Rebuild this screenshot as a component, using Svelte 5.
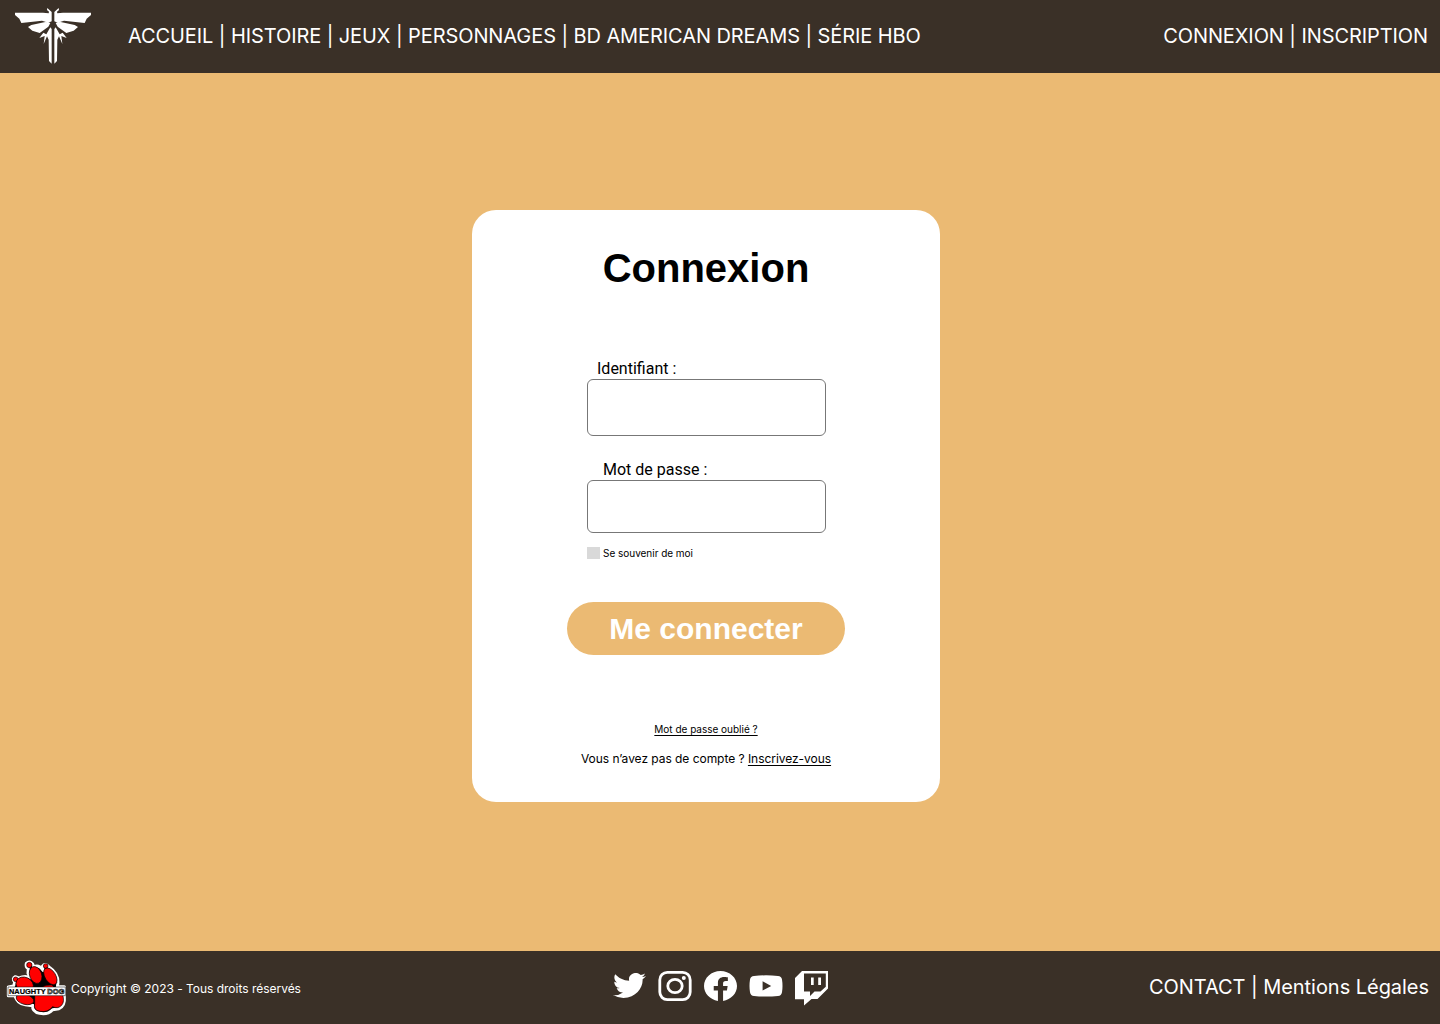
<script>
  const links = ['ACCUEIL', 'HISTOIRE', 'JEUX', 'PERSONNAGES', 'BD AMERICAN DREAMS', 'SÉRIE HBO'];
</script>

<div class="page">
  <header class="bar">
    <svg class="firefly" viewBox="36 18 246 180" aria-label="Firefly">
      <g fill="#fff">
        <path d="M45 38 L129 38 L146 40 L147 35 L141 30 L142 24 L155 36 L155 64 L145 68 L126 62 L64 69 L58 56 L45 45 Z M84 81 L94 75 L136 66 L151 69 L145 80 L119 99 L97 92 Z M151 82 L155 87 L155 191 L147 183 L146 119 L141 109 L131 132 L134 108 L118 114 L130 98 L139 103 Z" />
        <path d="M273 38 L189 38 L172 40 L171 35 L177 30 L176 24 L163 36 L163 64 L173 68 L192 62 L254 69 L260 56 L273 45 Z M234 81 L224 75 L182 66 L167 69 L173 80 L199 99 L221 92 Z M167 82 L163 87 L163 191 L171 183 L172 119 L177 109 L187 132 L184 108 L200 114 L188 98 L179 103 Z" />
      </g>
    </svg>
    <nav class="main">
      {#each links as link, i}{#if i}{' | '}{/if}<span>{link}</span>{/each}
    </nav>
    <nav class="side">CONNEXION | INSCRIPTION</nav>
  </header>

  <main>
    <form class="card">
      <h1>Connexion</h1>
      <label class="user" for="user">Identifiant :</label>
      <input id="user" class="field tall" type="text" />
      <label class="pass" for="pass">Mot de passe :</label>
      <input id="pass" class="field" type="password" />
      <div class="remember"><span class="box"></span><span>Se souvenir de moi</span></div>
      <button type="button">Me connecter</button>
      <span class="forgot">Mot de passe oublié ?</span>
      <p>Vous n’avez pas de compte ? <span class="signup">Inscrivez-vous</span></p>
    </form>
  </main>

  <footer class="bar">
    <svg class="paw" viewBox="18 24 186 180" aria-label="Naughty Dog">
      <path fill="#000" stroke="#fff" stroke-width="9" stroke-linejoin="round" d="M79 40 Q89 31 98 42 L101 50 Q117 44 126 57 L130 62 L127 49 Q136 37 147 51 Q175 70 174 98 L172 110 H193 V137 Q196 168 177 176 L158 179 Q143 195 119 190 Q96 185 98 166 Q60 168 50 149 L44 137 H25 V111 L41 108 L44 96 Q35 86 46 80 L56 84 Q76 75 94 84 L84 70 L85 56 Q76 51 79 40 Z" />
      <g fill="#f00" stroke="#000" stroke-width="2">
        <circle cx="88" cy="45" r="8" /><circle cx="137" cy="48" r="7" />
        <circle cx="47" cy="88" r="7" />
        <ellipse cx="107" cy="75" rx="18" ry="26" transform="rotate(-20 107 75)" />
        <ellipse cx="151" cy="79" rx="16" ry="28" transform="rotate(-32 151 79)" />
        <ellipse cx="74" cy="104" rx="27" ry="22" transform="rotate(25 74 104)" />
        <ellipse cx="75" cy="148" rx="27" ry="15" transform="rotate(15 75 148)" />
        <path d="M104 134 Q122 102 156 105 Q170 124 187 131 Q195 154 185 166 Q173 178 158 170 Q143 188 121 184 Q99 182 104 160 Z" />
      </g>
      <path fill="#fff" stroke="#000" stroke-width="1.5" d="M24 111 H196 V137 H24 Z" />
      <text x="27" y="132" textLength="110" lengthAdjust="spacingAndGlyphs" class="brand">NAUGHTY</text>
      <text x="142" y="132" textLength="51" lengthAdjust="spacingAndGlyphs" class="brand outline">DOG</text>
    </svg>
    <span class="copy">Copyright © 2023 - Tous droits réservés</span>
    <div class="social">
      <svg class="twitter" viewBox="0 2.2 24 19.6" preserveAspectRatio="none"><path fill="#fff" d="M23.953 4.57a10 10 0 01-2.825.775 4.958 4.958 0 002.163-2.723c-.951.555-2.005.959-3.127 1.184a4.92 4.92 0 00-8.384 4.482C7.69 8.095 4.067 6.13 1.64 3.162a4.822 4.822 0 00-.666 2.475c0 1.71.87 3.213 2.188 4.096a4.904 4.904 0 01-2.228-.616v.06a4.923 4.923 0 003.946 4.827 4.996 4.996 0 01-2.212.085 4.936 4.936 0 004.604 3.417 9.867 9.867 0 01-6.102 2.105c-.39 0-.779-.023-1.17-.067a13.995 13.995 0 007.557 2.209c9.053 0 13.998-7.496 13.998-13.985 0-.21 0-.42-.015-.63A9.935 9.935 0 0024 4.59z" /></svg>
      <svg class="instagram" viewBox="0 0 34 30"><g fill="none" stroke="#fff" stroke-width="2.8"><rect x="1.8" y="1.4" width="30.4" height="27.2" rx="7.5" /><ellipse cx="17" cy="15" rx="7.2" ry="6.7" /></g><circle cx="25.8" cy="7.1" r="2" fill="#fff" /></svg>
      <svg class="facebook" viewBox="0 0 24 24" preserveAspectRatio="none"><path fill="#fff" d="M24 12.073c0-6.627-5.373-12-12-12s-12 5.373-12 12c0 5.99 4.388 10.954 10.125 11.854v-8.385H7.078v-3.47h3.047V9.43c0-3.007 1.792-4.669 4.533-4.669 1.312 0 2.686.235 2.686.235v2.953H15.83c-1.491 0-1.956.925-1.956 1.874v2.25h3.328l-.532 3.47h-2.796v8.385C19.612 23.027 24 18.062 24 12.073z" /></svg>
      <svg class="youtube" viewBox="0 0 34 22"><path fill="#fff" fill-rule="evenodd" d="M5 1 Q17 -.3 29 1 Q32.4 1.3 33 4.5 Q34 11 33 17.2 Q32.4 20.6 29 21 Q17 22.2 5 21 Q1.6 20.6 1 17.2 Q0 11 1 4.5 Q1.6 1.3 5 1 Z M13.6 6.3 V15.6 L22.2 11 Z" /></svg>
      <svg class="twitch" viewBox="0 0 33 34"><path fill="#fff" fill-rule="evenodd" d="M7 0 H33 V17.5 L22.5 28 H16.5 L9 34.5 V28.3 H0 V7 Z M9 2.5 V20.5 H15 V25 L19.5 20.5 H25.5 L30.8 15.8 V2.5 Z M16 6.5 H18.7 V14 H16 Z M23.2 6.5 H26 V14 H23.2 Z" /></svg>
    </div>
    <nav class="side legal">CONTACT | Mentions Légales</nav>
  </footer>
</div>

<style>
  :global(body) { margin: 0; }
  .page {
    width: 1440px;
    height: 1024px;
    display: flex;
    flex-direction: column;
    background: #ebba73;
    font-family: Inter, sans-serif;
    color: #000;
    overflow: hidden;
  }
  .bar {
    height: 73px;
    flex: none;
    box-sizing: border-box;
    display: flex;
    align-items: flex-start;
    background: #3a3027;
    color: #fff;
  }
  svg { display: block; flex: none; }
  .firefly { width: 82px; height: 60px; margin: 6px 34px 0 12px; }
  .main, .side { font-size: 20px; line-height: 24px; letter-spacing: -0.09px; padding-top: 24px; white-space: pre; }
  .side { margin-left: auto; padding-right: 12px; }
  .side.legal { padding-right: 11px; letter-spacing: -0.04px; }
  main { flex: 1; padding: 137px 0 0 472px; }
  .card {
    width: 468px;
    height: 592px;
    box-sizing: border-box;
    border-radius: 24px;
    background: #fff;
    display: flex;
    flex-direction: column;
    align-items: center;
    padding-top: 35px;
  }
  h1 { margin: 0; font: bold 40px/46px "Liberation Sans", Arial, sans-serif; }
  label { align-self: flex-start; font: 16px/19px Roboto, sans-serif; }
  .user { margin: 68px 0 0 125px; }
  .pass { margin: 24px 0 0 131px; }
  .field {
    width: 239px;
    height: 53px;
    box-sizing: border-box;
    margin: 1px 0 0 1px;
    border: 1px solid #777;
    border-radius: 6px;
    background: #fff;
    outline: 0;
  }
  .tall { height: 57px; }
  .remember {
    align-self: flex-start;
    display: flex;
    align-items: center;
    gap: 3px;
    margin: 14px 0 0 115px;
    font-size: 10px;
    line-height: 12px;
    letter-spacing: -0.02px;
  }
  .box { width: 13px; height: 12px; background: #d9d9d9; }
  button {
    width: 278px;
    height: 53px;
    margin-top: 43px;
    padding: 0;
    border: 0;
    border-radius: 27px;
    background: #ebba73;
    color: #fff;
    font: bold 30px/53px "Liberation Sans", Arial, sans-serif;
  }
  .forgot { margin-top: 68px; font-size: 10px; line-height: 12px; letter-spacing: -0.01px; text-decoration: underline; text-decoration-thickness: 1px; text-underline-offset: 2px; }
  p { margin: 16px 0 0; font-size: 12px; line-height: 16px; letter-spacing: -0.04px; }
  .signup { text-decoration: underline; text-underline-offset: 2px; }
  .paw { width: 62px; height: 60px; margin: 7px 0 0 6px; }
  .brand { font: bold 23px "Liberation Sans", sans-serif; fill: #000; stroke: #000; stroke-width: 0.6px; }
  .outline { fill: #fff; stroke-width: 2px; }
  .copy { width: 542px; margin-left: 3px; padding-top: 30px; font-size: 12px; line-height: 15px; letter-spacing: -0.02px; }
  .social { display: flex; padding-top: 20px; }
  .twitter { width: 33px; height: 25px; margin-top: 2px; }
  .instagram { width: 34px; height: 30px; margin-left: 12px; }
  .facebook { width: 33px; height: 30px; margin-left: 12px; }
  .youtube { width: 34px; height: 22px; margin: 4px 0 0 12px; }
  .twitch { width: 33px; height: 34px; margin-left: 12px; overflow: visible; }
</style>
